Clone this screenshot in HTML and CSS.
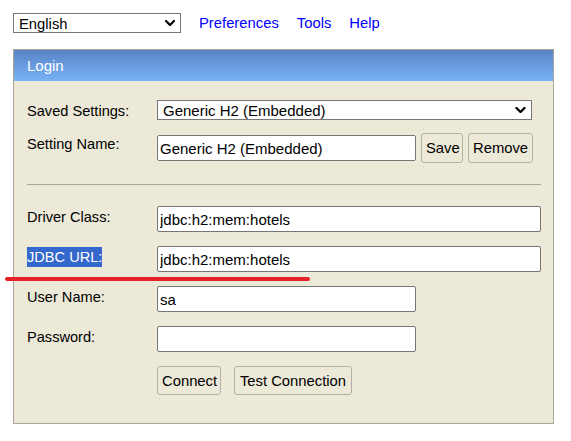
FILE: index.html
```html
<!DOCTYPE html>
<html lang="en">
<head>
<meta charset="utf-8">
<title>H2 Console</title>
<link rel="stylesheet" href="styles.css">
</head>
<body>
<div class="toolbar">
  <div class="select-wrap lang">
    <select class="select"><option>English</option></select>
    <svg class="chev" viewBox="0 0 10 6" width="10" height="6"><polyline points="1,1 5,5 9,1"/></svg>
  </div>
  <a class="link" href="#">Preferences</a>
  <a class="link" href="#">Tools</a>
  <a class="link" href="#">Help</a>
</div>

<div class="panel">
  <div class="panel-head">Login</div>
  <div class="panel-body">
    <div class="group group-top">
      <div class="row">
        <div class="label">Saved Settings:</div>
        <div class="field">
          <div class="select-wrap saved">
            <select class="select"><option>Generic H2 (Embedded)</option></select>
            <svg class="chev" viewBox="0 0 10 6" width="11" height="6"><polyline points="1,1 5,5 9,1"/></svg>
          </div>
        </div>
      </div>
      <div class="row">
        <div class="label">Setting Name:</div>
        <div class="field">
          <input class="input short" type="text" value="Generic H2 (Embedded)">
          <button class="btn btn-save">Save</button>
          <button class="btn btn-remove">Remove</button>
        </div>
      </div>
    </div>

    <div class="divider"></div>

    <div class="group group-bottom">
      <div class="row">
        <div class="label">Driver Class:</div>
        <div class="field"><input class="input long" type="text" value="jdbc:h2:mem:hotels"></div>
      </div>
      <div class="row">
        <div class="label label-selected"><span class="selected">JDBC URL:</span></div>
        <div class="field"><input class="input long" type="text" value="jdbc:h2:mem:hotels"></div>
      </div>
      <div class="row">
        <div class="label">User Name:</div>
        <div class="field"><input class="input short" type="text" value="sa"></div>
      </div>
      <div class="row">
        <div class="label">Password:</div>
        <div class="field"><input class="input short" type="password" value=""></div>
      </div>
      <div class="row">
        <div class="label"></div>
        <div class="field actions">
          <button class="btn btn-big btn-connect">Connect</button>
          <button class="btn btn-big btn-test">Test Connection</button>
        </div>
      </div>
    </div>
  </div>
</div>

<div class="annotation"></div>
</body>
</html>
```

FILE: styles.css
```css
html, body {
  background: #ffffff;
}

body {
  margin: 0;
  padding: 13px;
  font-family: "Liberation Sans", Arial, sans-serif;
  color: #000;
  position: relative;
}

/* top toolbar */
.toolbar {
  display: flex;
  align-items: center;
  gap: 18px;
  height: 20px;
  margin-bottom: 16px;
}

.link {
  color: #0000ff;
  text-decoration: none;
  font-size: 14.8px;
  line-height: 21px;
  padding-top: 1px;
}

.select-wrap {
  position: relative;
  display: flex;
}

.select {
  appearance: none;
  -webkit-appearance: none;
  margin: 0;
  width: 100%;
  height: 20px;
  box-sizing: border-box;
  border: 1px solid #767676;
  border-radius: 0;
  background: #ffffff;
  color: #000;
  font-family: "Liberation Sans", Arial, sans-serif;
  padding: 1px 0 0 5px;
  line-height: 18px;
}

.lang {
  width: 168px;
}

.lang .select {
  font-size: 14.8px;
}

.saved {
  width: 375px;
}

.saved .select {
  font-size: 15px;
}

.chev {
  position: absolute;
  right: 6px;
  top: 7px;
  pointer-events: none;
}

.chev polyline {
  fill: none;
  stroke: #000;
  stroke-width: 2.2;
  stroke-linecap: square;
  stroke-linejoin: miter;
}

/* panel */
.panel {
  width: 541px;
  box-sizing: border-box;
  border: 1px solid #aaa79a;
  background: #ece9d8;
}

.panel-head {
  height: 31px;
  line-height: 31px;
  padding-left: 13px;
  color: #ffffff;
  font-size: 15px;
  background: linear-gradient(to bottom, #5883c4 0%, #6799dc 45%, #78b2f4 100%);
}

.panel-body {
  padding: 19px 12px 28px 13px;
}

.group {
  display: flex;
  flex-direction: column;
}

.group-top {
  gap: 13px;
}

.group-bottom {
  gap: 14px;
}

.divider {
  height: 1px;
  background: #a9a69c;
  margin: 21px 0 21px;
}

.row {
  display: flex;
  align-items: flex-start;
}

.label {
  width: 130px;
  flex: none;
  font-size: 14.6px;
  line-height: 17px;
  padding-top: 3px;
}

.label-selected {
  padding-top: 1px;
}

.selected {
  display: inline-block;
  background: #3468cc;
  color: #ffffff;
  line-height: 20px;
}

.field {
  display: flex;
  align-items: center;
  gap: 5px;
}

.actions {
  gap: 13px;
}

.input {
  margin: 0;
  height: 26px;
  box-sizing: border-box;
  border: 1px solid #767676;
  border-radius: 2px;
  background: #fff;
  padding: 1px 2px;
  font-family: "Liberation Sans", Arial, sans-serif;
  font-size: 15px;
  color: #000;
  outline: none;
}

.input.short {
  width: 259px;
}

.input.long {
  width: 384px;
}

.btn {
  margin: 0;
  box-sizing: border-box;
  border: 1px solid #b3b0a3;
  border-radius: 3px;
  background: #ece9d8;
  color: #000;
  font-family: "Liberation Sans", Arial, sans-serif;
  font-size: 14.8px;
  padding: 0 4px;
  height: 30px;
}

.btn-save {
  width: 42px;
}

.btn-remove {
  width: 65px;
}

.btn-big {
  height: 29px;
}

.btn-connect {
  width: 64px;
}

.btn-test {
  width: 118px;
}

/* red underline annotation drawn over the page */
.annotation {
  position: absolute;
  left: 5px;
  top: 277px;
  width: 305px;
  height: 4px;
  border-radius: 2px;
  background: #e5222a;
}
```
